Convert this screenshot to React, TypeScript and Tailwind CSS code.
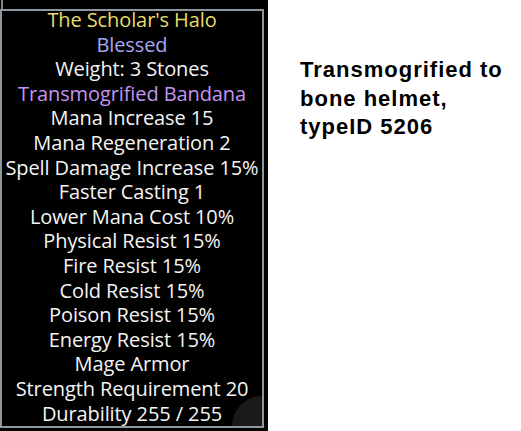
import React from "react";

const lines: { t: string; c: string }[] = [
  { t: "The Scholar's Halo", c: "text-[#e6dc6a]" },
  { t: "Blessed", c: "text-[#a9a6ef]" },
  { t: "Weight: 3 Stones", c: "text-[#f4f4f4]" },
  { t: "Transmogrified Bandana", c: "text-[#c295f2]" },
  { t: "Mana Increase 15", c: "text-[#f4f4f4]" },
  { t: "Mana Regeneration 2", c: "text-[#f4f4f4]" },
  { t: "Spell Damage Increase 15%", c: "text-[#f4f4f4]" },
  { t: "Faster Casting 1", c: "text-[#f4f4f4]" },
  { t: "Lower Mana Cost 10%", c: "text-[#f4f4f4]" },
  { t: "Physical Resist 15%", c: "text-[#f4f4f4]" },
  { t: "Fire Resist 15%", c: "text-[#f4f4f4]" },
  { t: "Cold Resist 15%", c: "text-[#f4f4f4]" },
  { t: "Poison Resist 15%", c: "text-[#f4f4f4]" },
  { t: "Energy Resist 15%", c: "text-[#f4f4f4]" },
  { t: "Mage Armor", c: "text-[#f4f4f4]" },
  { t: "Strength Requirement 20", c: "text-[#f4f4f4]" },
  { t: "Durability 255 / 255", c: "text-[#f4f4f4]" },
];

export default function App() {
  return (
    <div className="flex w-[521px] h-[431px] bg-white overflow-hidden">
      <div className="relative w-[268px] h-[431px] bg-black shrink-0 pt-[9px]">
        <div className="absolute left-[1px] top-0 w-[2px] h-[10px] bg-[#7d8790]" />
        <div className="relative w-[264px] h-[419px] border-2 border-[#8d979f] flex flex-col items-center">
          <div className="absolute inset-0 overflow-hidden">
            <div className="absolute right-[-30px] bottom-[-30px] w-[60px] h-[60px] rounded-full bg-[#2a2a2a] opacity-60" />
          </div>
          <div className="relative -mt-[3px] flex flex-col items-center font-['Open_Sans',sans-serif] text-[20px] leading-[24.6px] tracking-[-0.1px]">
            {lines.map((l, i) => (
              <div key={i} className={`${l.c} whitespace-nowrap`}>
                {l.t}
              </div>
            ))}
          </div>
        </div>
      </div>
      <div className="pl-[32px] pt-[56px] flex flex-col font-['Liberation_Sans',Arial,sans-serif] font-bold text-[22px] leading-[28.5px] tracking-[1px] text-black">
        <div className="whitespace-nowrap">Transmogrified to</div>
        <div className="whitespace-nowrap">bone helmet,</div>
        <div className="whitespace-nowrap">typeID 5206</div>
      </div>
    </div>
  );
}
